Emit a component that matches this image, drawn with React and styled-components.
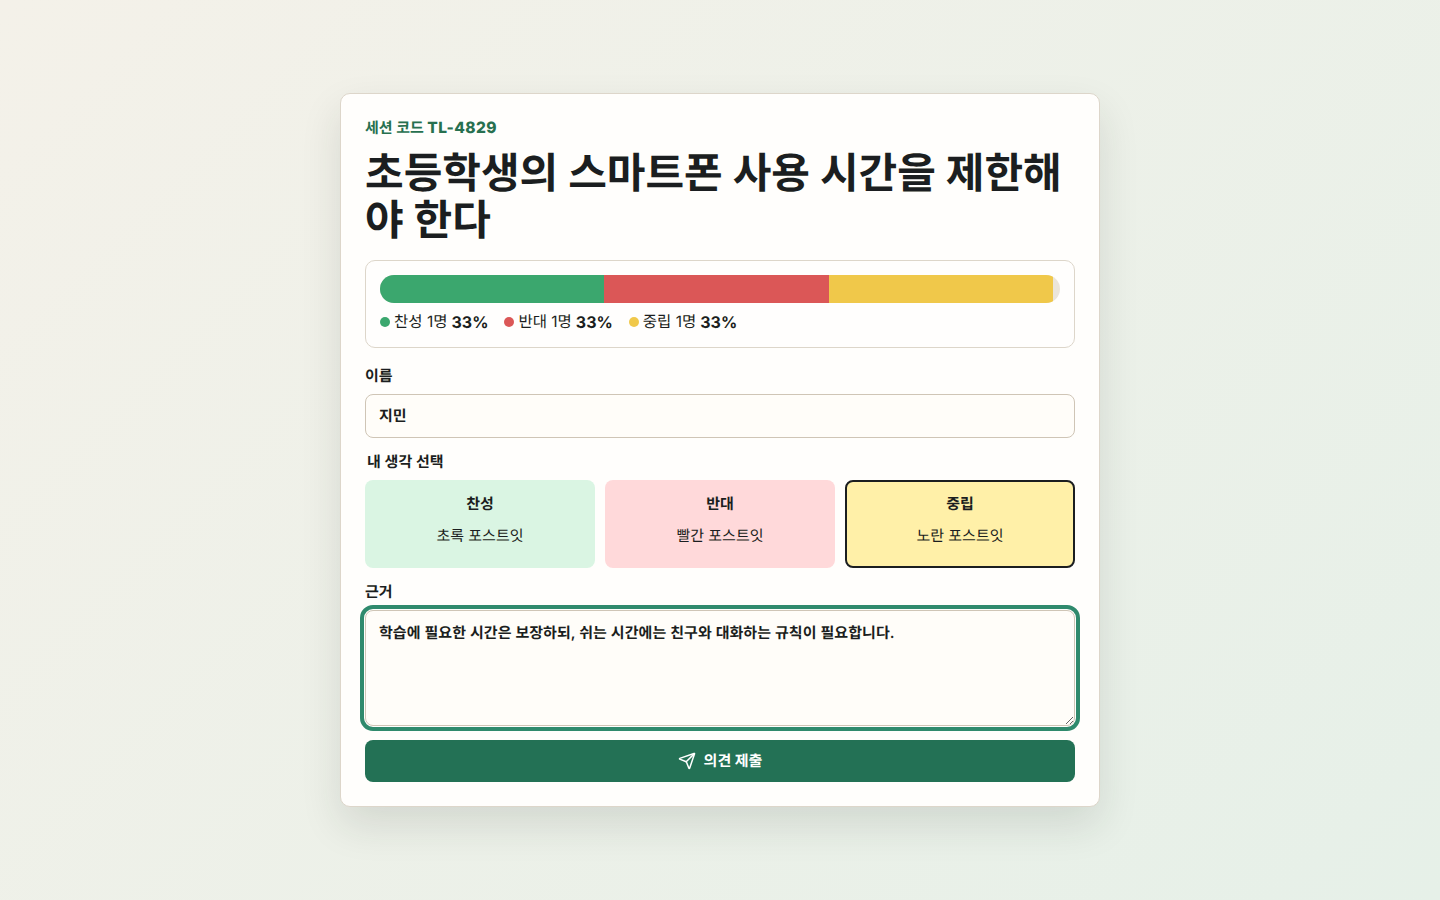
import React, { useState } from 'react';
import styled, { createGlobalStyle } from 'styled-components';
import { Send } from 'lucide-react';

const GlobalStyle = createGlobalStyle`
  * { box-sizing: border-box; text-rendering: geometricPrecision; }
  html, body { margin: 0; padding: 0; height: 100%; }
  body {
    font-family: Inter, "Noto Sans CJK KR", sans-serif;
    color: #1b1e20;
    background: linear-gradient(135deg, #f4f1e9 0%, #e6f0e8 100%);
  }
`;

const Page = styled.main`
  min-height: 100vh;
  display: flex;
  align-items: center;
  justify-content: center;
`;

const Card = styled.form`
  width: 760px;
  padding: 24px;
  background: #fffefc;
  border: 1px solid #ddd6ca;
  border-radius: 10px;
  box-shadow: 0 18px 40px rgba(30, 40, 30, 0.12);
`;

const Eyebrow = styled.p`
  margin: 0;
  font-size: 15px;
  line-height: 20px;
  font-weight: 700;
  color: #27704f;
  em { font-style: normal; font-size: 15.5px; font-weight: 800; letter-spacing: 0.4px; }
`;

const Title = styled.h1`
  margin: 12px 0 16px;
  font-size: 42px;
  line-height: 47px;
  font-weight: 700;
`;

const Tally = styled.section`
  padding: 14px 14px 15px;
  background: #fffefd;
  border: 1px solid #ddd6ca;
  border-radius: 10px;
`;

const Track = styled.div`
  display: flex;
  height: 28px;
  overflow: hidden;
  border-radius: 14px;
  background: #ebe5da;
`;

const Segment = styled.div`
  background: ${(p) => p.$color};
`;

const Legend = styled.div`
  display: flex;
  gap: 16px;
  margin-top: 9px;
  font-size: 15.5px;
  line-height: 20px;
`;

const LegendItem = styled.span`
  display: inline-flex;
  align-items: center;
  gap: 4px;
  strong { font-weight: 700; font-size: 16px; }
`;

const Dot = styled.i`
  width: 10px;
  height: 10px;
  border-radius: 50%;
  background: ${(p) => p.$color};
`;

const Field = styled.label`
  display: block;
  margin-top: ${(p) => p.$top || 12}px;
`;

const LabelText = styled.span`
  display: block;
  margin-bottom: 6px;
  font-size: 15px;
  line-height: 24px;
  font-weight: 600;
`;

const TextInput = styled.input`
  display: block;
  width: 100%;
  height: 44px;
  padding: 0 13px 2px;
  font: 600 15px Inter, "Noto Sans CJK KR", sans-serif;
  color: #1b1e20;
  background: #fffdf9;
  border: 1px solid #cfc5b6;
  border-radius: 8px;
`;

const Choices = styled.fieldset`
  margin: 12px 0 0;
  padding: 0;
  border: 0;
  min-width: 0;
`;

const ChoiceLegend = styled.legend`
  padding: 0 2px;
  margin-bottom: 6px;
  font-size: 15px;
  line-height: 24px;
  font-weight: 600;
`;

const ChoiceGrid = styled.div`
  display: grid;
  grid-template-columns: repeat(3, 1fr);
  gap: 10px;
`;

const Choice = styled.button`
  display: flex;
  flex-direction: column;
  align-items: center;
  justify-content: center;
  gap: 10px;
  height: 88px;
  padding: 0 0 8px;
  font-family: inherit;
  color: #1b1e20;
  background: ${(p) => p.$bg};
  border: 2px solid ${(p) => (p.$active ? '#1b1e20' : 'transparent')};
  border-radius: 8px;
  cursor: pointer;
  b { font-size: 15px; line-height: 22px; font-weight: 700; }
  span { font-size: 15px; line-height: 22px; font-weight: 400; }
`;

const Reason = styled.textarea`
  display: block;
  width: 100%;
  height: 116px;
  padding: 12px 13px;
  font: 600 15px/20px Inter, "Noto Sans CJK KR", sans-serif;
  letter-spacing: 0.07px;
  color: #1b1e20;
  background: #fffdf9;
  border: 1px solid #cfc5b6;
  border-radius: 8px;
  outline: 4px solid #2f8a6d;
  outline-offset: 1px;
`;

const Submit = styled.button`
  display: flex;
  align-items: center;
  justify-content: center;
  gap: 8px;
  width: 100%;
  height: 42px;
  margin-top: 14px;
  padding: 0 0 1px;
  font: 700 15px Inter, "Noto Sans CJK KR", sans-serif;
  color: #fff;
  background: #237155;
  border: 0;
  border-radius: 8px;
  cursor: pointer;
`;

const tally = [
  { name: '찬성', color: '#3ba76e', count: 1, pct: 33 },
  { name: '반대', color: '#db5757', count: 1, pct: 33 },
  { name: '중립', color: '#f0c84a', count: 1, pct: 33 },
];

const options = [
  { name: '찬성', note: '초록 포스트잇', bg: '#daf5e3' },
  { name: '반대', note: '빨간 포스트잇', bg: '#ffd9da' },
  { name: '중립', note: '노란 포스트잇', bg: '#fff0a8' },
];

export default function App() {
  const [name, setName] = useState('지민');
  const [pick, setPick] = useState('중립');
  const [reason, setReason] = useState('학습에 필요한 시간은 보장하되, 쉬는 시간에는 친구와 대화하는 규칙이 필요합니다.');

  return (
    <Page>
      <GlobalStyle />
      <Card onSubmit={(e) => e.preventDefault()}>
        <Eyebrow>세션 코드 <em>TL-4829</em></Eyebrow>
        <Title>초등학생의 스마트폰 사용 시간을 제한해야 한다</Title>
        <Tally>
          <Track>
            {tally.map((t) => (
              <Segment key={t.name} $color={t.color} style={{ width: `${t.pct}%` }} />
            ))}
          </Track>
          <Legend>
            {tally.map((t) => (
              <LegendItem key={t.name}>
                <Dot $color={t.color} />
                {t.name} {t.count}명 <strong>{t.pct}%</strong>
              </LegendItem>
            ))}
          </Legend>
        </Tally>
        <Field $top={16}>
          <LabelText>이름</LabelText>
          <TextInput value={name} onChange={(e) => setName(e.target.value)} />
        </Field>
        <Choices>
          <ChoiceLegend>내 생각 선택</ChoiceLegend>
          <ChoiceGrid>
            {options.map((o) => (
              <Choice key={o.name} type="button" $bg={o.bg} $active={pick === o.name} onClick={() => setPick(o.name)}>
                <b>{o.name}</b>
                <span>{o.note}</span>
              </Choice>
            ))}
          </ChoiceGrid>
        </Choices>
        <Field>
          <LabelText>근거</LabelText>
          <Reason value={reason} onChange={(e) => setReason(e.target.value)} />
        </Field>
        <Submit type="submit">
          <Send size={18} strokeWidth={2} />
          의견 제출
        </Submit>
      </Card>
    </Page>
  );
}
